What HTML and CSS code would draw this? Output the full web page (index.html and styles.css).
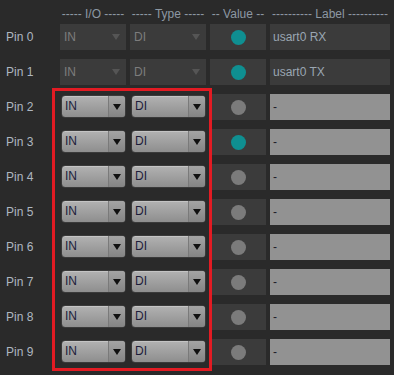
FILE: index.html
```html
<!DOCTYPE html>
<html lang="en">
<head>
    <meta charset="UTF-8">
    <meta name="viewport" content="width=device-width, initial-scale=1.0">
    <title>Pin configuration</title>
    <link rel="stylesheet" href="styles.css">
</head>
<body>
    <div class="panel">
        <div class="head">
            <span></span>
            <span>----- I/O -----</span>
            <span>----- Type -----</span>
            <span>-- Value --</span>
            <span>---------- Label ----------</span>
        </div>

        <div class="pins">
            <div class="pin">Pin 0</div>
            <div class="select locked"><span class="text">IN</span><span class="arrow"></span></div>
            <div class="select locked"><span class="text">DI</span><span class="arrow"></span></div>
            <div class="value"><span class="led on"></span></div>
            <div class="label locked">usart0 RX</div>

            <div class="pin">Pin 1</div>
            <div class="select locked"><span class="text">IN</span><span class="arrow"></span></div>
            <div class="select locked"><span class="text">DI</span><span class="arrow"></span></div>
            <div class="value"><span class="led on"></span></div>
            <div class="label locked">usart0 TX</div>

            <div class="pin">Pin 2</div>
            <div class="select"><span class="text">IN</span><span class="arrow"></span></div>
            <div class="select"><span class="text">DI</span><span class="arrow"></span></div>
            <div class="value"><span class="led"></span></div>
            <div class="label">-</div>

            <div class="pin">Pin 3</div>
            <div class="select"><span class="text">IN</span><span class="arrow"></span></div>
            <div class="select"><span class="text">DI</span><span class="arrow"></span></div>
            <div class="value"><span class="led on"></span></div>
            <div class="label">-</div>

            <div class="pin">Pin 4</div>
            <div class="select"><span class="text">IN</span><span class="arrow"></span></div>
            <div class="select"><span class="text">DI</span><span class="arrow"></span></div>
            <div class="value"><span class="led"></span></div>
            <div class="label">-</div>

            <div class="pin">Pin 5</div>
            <div class="select"><span class="text">IN</span><span class="arrow"></span></div>
            <div class="select"><span class="text">DI</span><span class="arrow"></span></div>
            <div class="value"><span class="led"></span></div>
            <div class="label">-</div>

            <div class="pin">Pin 6</div>
            <div class="select"><span class="text">IN</span><span class="arrow"></span></div>
            <div class="select"><span class="text">DI</span><span class="arrow"></span></div>
            <div class="value"><span class="led"></span></div>
            <div class="label">-</div>

            <div class="pin">Pin 7</div>
            <div class="select"><span class="text">IN</span><span class="arrow"></span></div>
            <div class="select"><span class="text">DI</span><span class="arrow"></span></div>
            <div class="value"><span class="led"></span></div>
            <div class="label">-</div>

            <div class="pin">Pin 8</div>
            <div class="select"><span class="text">IN</span><span class="arrow"></span></div>
            <div class="select"><span class="text">DI</span><span class="arrow"></span></div>
            <div class="value"><span class="led"></span></div>
            <div class="label">-</div>

            <div class="pin">Pin 9</div>
            <div class="select"><span class="text">IN</span><span class="arrow"></span></div>
            <div class="select"><span class="text">DI</span><span class="arrow"></span></div>
            <div class="value"><span class="led"></span></div>
            <div class="label">-</div>
        </div>

        <!-- highlight round the editable pins -->
        <div class="highlight"></div>
    </div>
</body>
</html>
```

FILE: styles.css
```css
body {
    margin: 0;
    padding: 0;
    background-color: #2a2a2a;
    font-family: 'Liberation Sans', Arial, sans-serif;
    font-size: 12px;
    color: #a9b3bd;
}
.panel {
    position: relative;
    width: 394px;
    height: 375px;
}
.head,
.pins {
    display: grid;
    grid-template-columns: 56px 66px 76px 56px 120px;
    column-gap: 4px;
}
.head {
    height: 24px;
    line-height: 22px;
    padding-top: 3px;
    box-sizing: border-box;
    color: #8d98a3;
    text-align: center;
    white-space: nowrap;
}
.pins {
    grid-auto-rows: 26px;
    row-gap: 9px;
}
.pin {
    padding-left: 6px;
    line-height: 26px;
    color: #aeb7c0;
}
.select {
    display: flex;
    margin: 1px 0 2px 1px;
    border: 1px solid #3a3a3a;
    border-radius: 4px;
    background: linear-gradient(#b2b2b2, #8e8e8e);
    box-shadow: inset 0 1px 0 rgba(255, 255, 255, 0.25);
    color: #1d1c3a;
    line-height: 21px;
    overflow: hidden;
}
.select .text {
    flex: 1;
    padding-left: 3px;
}
.select .arrow {
    position: relative;
    width: 16px;
    border-left: 1px solid #7a7a7a;
    background: linear-gradient(#a4a4a4, #848484);
}
.select .arrow::after {
    content: '';
    position: absolute;
    left: 4px;
    top: 8px;
    border-left: 4px solid transparent;
    border-right: 4px solid transparent;
    border-top: 6px solid #111;
}
.select.locked {
    margin: 0;
    border: none;
    border-radius: 0;
    background: #3b3b3b;
    box-shadow: none;
    color: #7d7d7d;
    line-height: 26px;
}
.select.locked .text {
    padding-left: 4px;
}
.select.locked .arrow {
    border-left: none;
    background: none;
}
.select.locked .arrow::after {
    top: 10px;
    left: 2px;
    border-top-color: #555;
}
.value {
    display: flex;
    justify-content: center;
    align-items: center;
    background-color: #3b3b3b;
}
.led {
    width: 15px;
    height: 15px;
    border-radius: 50%;
    background-color: #7b7b7b;
}
.led.on {
    background-color: #0f8f91;
}
.label {
    padding-left: 3px;
    line-height: 26px;
    background-color: #929292;
    color: #1f1f2a;
}
.label.locked {
    background-color: #3b3b3b;
    color: #9aa6b2;
}
.highlight {
    position: absolute;
    left: 52px;
    top: 88px;
    width: 160px;
    height: 283px;
    box-sizing: border-box;
    border: 3px solid #e21b23;
    pointer-events: none;
}
```
